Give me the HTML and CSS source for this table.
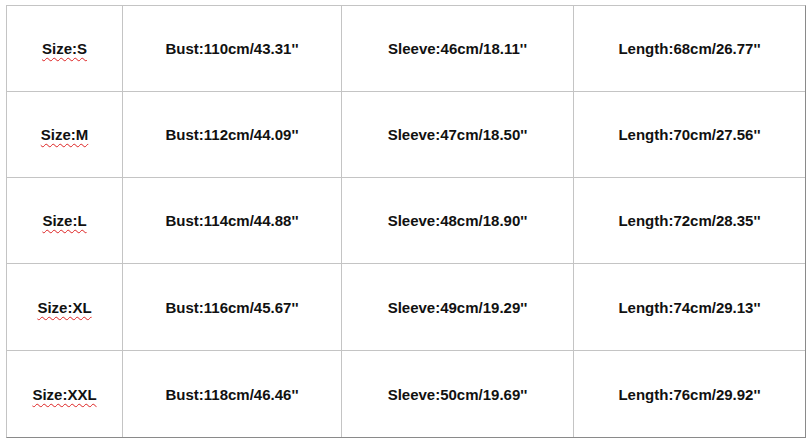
FILE: index.html
```html
<!DOCTYPE html>
<html>
<head>
<meta charset="utf-8">
<link rel="stylesheet" href="styles.css">
</head>
<body>
<div class="chart">
  <div class="cell"><span class="sp">Size:S</span></div>
  <div class="cell">Bust:110cm/43.31''</div>
  <div class="cell">Sleeve:46cm/18.11''</div>
  <div class="cell last">Length:68cm/26.77''</div>

  <div class="cell"><span class="sp">Size:M</span></div>
  <div class="cell">Bust:112cm/44.09''</div>
  <div class="cell">Sleeve:47cm/18.50''</div>
  <div class="cell last">Length:70cm/27.56''</div>

  <div class="cell"><span class="sp">Size:L</span></div>
  <div class="cell">Bust:114cm/44.88''</div>
  <div class="cell">Sleeve:48cm/18.90''</div>
  <div class="cell last">Length:72cm/28.35''</div>

  <div class="cell"><span class="sp">Size:XL</span></div>
  <div class="cell">Bust:116cm/45.67''</div>
  <div class="cell">Sleeve:49cm/19.29''</div>
  <div class="cell last">Length:74cm/29.13''</div>

  <div class="cell bottom"><span class="sp">Size:XXL</span></div>
  <div class="cell bottom">Bust:118cm/46.46''</div>
  <div class="cell bottom">Sleeve:50cm/19.69''</div>
  <div class="cell bottom last">Length:76cm/29.92''</div>
</div>
</body>
</html>
```
FILE: styles.css
```css
html, body {
  margin: 0;
  padding: 0;
  background: #ffffff;
}
body {
  padding: 5px 0 0 6px;
  font-family: "Liberation Sans", Arial, sans-serif;
}
.chart {
  display: grid;
  grid-template-columns: 116px 219px 232px 231px;
  grid-template-rows: 86px 86px 86px 87px 86px;
  width: 798px;
  border-left: 1px solid #c4c4c4;
  border-top: 1px solid #c4c4c4;
  border-right: 1px solid #8a8a8a;
  border-bottom: 1px solid #8a8a8a;
}
.cell {
  display: flex;
  align-items: center;
  justify-content: center;
  border-right: 1px solid #c4c4c4;
  border-bottom: 1px solid #c4c4c4;
  font-size: 15px;
  font-weight: bold;
  color: #111111;
  white-space: nowrap;
}
.cell.last {
  border-right: none;
}
.cell.bottom {
  border-bottom: none;
}
.sp {
  text-decoration: underline wavy #d22;
  text-decoration-thickness: 1px;
  text-underline-offset: 3px;
}
```
